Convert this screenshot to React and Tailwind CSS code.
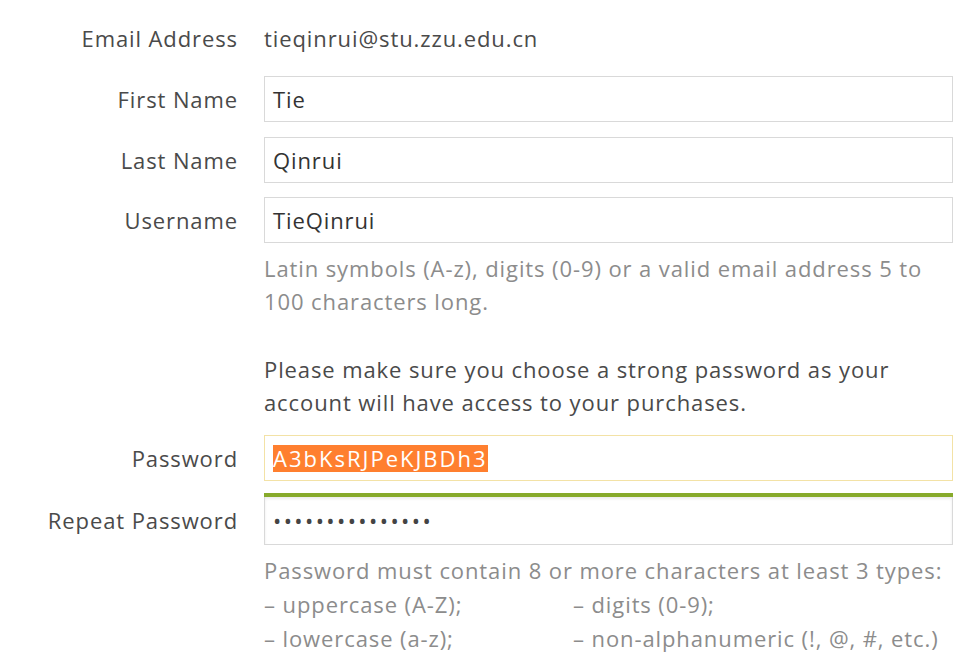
const font = { fontFamily: '"Open Sans", "Liberation Sans", sans-serif' };

const Label = ({ children }) => (
  <div className="flex h-[46px] items-center justify-end text-[22px] tracking-[0.9px] text-[#4a4a4a]">
    {children}
  </div>
);

const Box = ({ children, className = "" }) => (
  <div
    className={`flex h-[46px] items-center border border-[#d9d9d9] bg-white px-[8px] text-[22px] tracking-[0.9px] text-[#333] ${className}`}
  >
    {children}
  </div>
);

export default function App() {
  return (
    <div style={font} className="min-h-[669px] w-[967px] bg-white pt-[15px] pr-[14px]">
      <div className="grid grid-cols-[238px_1fr] gap-x-[26px]">
        <Label>Email Address</Label>
        <div className="flex h-[46px] items-center text-[22px] tracking-[0.9px] text-[#4a4a4a]">
          tieqinrui@stu.zzu.edu.cn
        </div>

        <div className="mt-[15px]">
          <Label>First Name</Label>
        </div>
        <div className="mt-[15px]">
          <Box>Tie</Box>
        </div>

        <div className="mt-[15px]">
          <Label>Last Name</Label>
        </div>
        <div className="mt-[15px]">
          <Box>Qinrui</Box>
        </div>

        <div className="mt-[14px]">
          <Label>Username</Label>
        </div>
        <div className="mt-[14px]">
          <Box>TieQinrui</Box>
          <p className="mt-[9px] text-[22px] leading-[33px] tracking-[0.9px] text-[#8c8c8c]">
            Latin symbols (A-z), digits (0-9) or a valid email address 5 to 100 characters long.
          </p>
          <p className="mt-[35px] pr-[40px] text-[22px] leading-[33px] tracking-[0.9px] text-[#4a4a4a]">
            Please make sure you choose a strong password as your account will have access to your purchases.
          </p>
        </div>

        <div className="mt-[16px]">
          <Label>Password</Label>
        </div>
        <div className="mt-[16px]">
          <Box className="border-[#f3e2a6] bg-[#fffbc7]">
            <span className="bg-[#ff7f2f] leading-[27px] tracking-[2px] text-white">A3bKsRJPeKJBDh3</span>
          </Box>
        </div>

        <div className="mt-[12px]">
          <div className="h-[4px]" />
          <Label>Repeat Password</Label>
        </div>
        <div className="mt-[12px]">
          <div className="h-[4px] bg-[#87aa2b]" />
          <div className="flex h-[48px] items-center border border-t-0 border-[#d9d9d9] bg-white px-[8px] text-[22px] tracking-[2.4px] text-[#444] shadow-[inset_0_2px_3px_rgba(0,0,0,0.08)]">
            •••••••••••••••
          </div>
          <div className="mt-[8px] text-[22px] leading-[34px] tracking-[0.9px] text-[#8c8c8c]">
            <p>Password must contain 8 or more characters at least 3 types:</p>
            <div className="grid grid-cols-[309px_1fr]">
              <span>– uppercase (A-Z);</span>
              <span>– digits (0-9);</span>
              <span>– lowercase (a-z);</span>
              <span>– non-alphanumeric (!, @, #, etc.)</span>
            </div>
          </div>
        </div>
      </div>
    </div>
  );
}
